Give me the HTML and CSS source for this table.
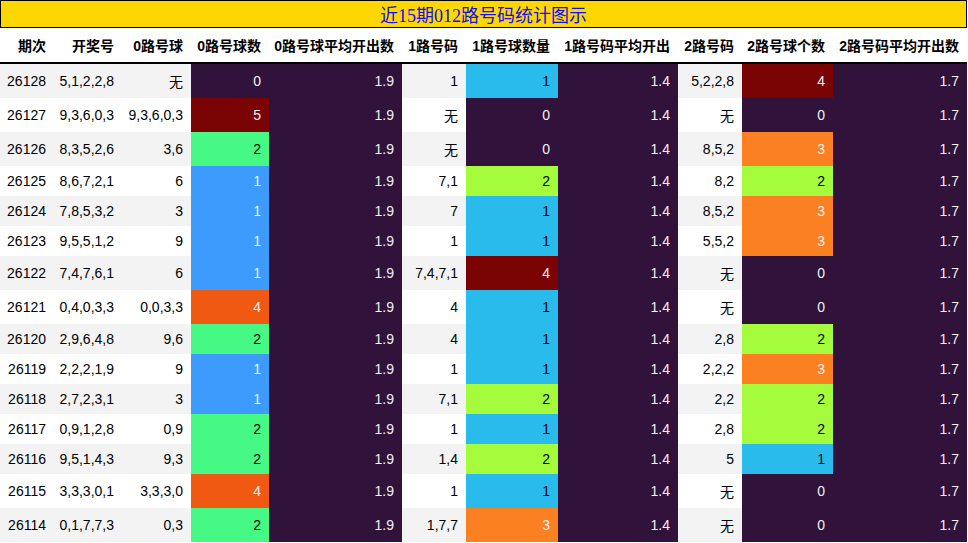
FILE: index.html
```html
<!DOCTYPE html>
<html lang="zh">
<head>
<meta charset="utf-8">
<title>近15期012路号码统计图示</title>
<link rel="stylesheet" href="styles.css">
</head>
<body>
<div class="wrap">
  <div class="title">近15期012路号码统计图示</div>
  <table class="stats">
    <colgroup>
      <col class="w1"><col class="w2"><col class="w3"><col class="w4"><col class="w5"><col class="w6"><col class="w7"><col class="w8"><col class="w9"><col class="w10"><col class="w11">
    </colgroup>
    <thead>
      <tr>
        <th>期次</th><th>开奖号</th><th>0路号球</th><th>0路号球数</th><th>0路号球平均开出数</th><th>1路号码</th><th>1路号球数量</th><th>1路号码平均开出</th><th>2路号码</th><th>2路号球个数</th><th>2路号码平均开出数</th>
      </tr>
    </thead>
    <tbody>
      <tr><td>26128</td><td>5,1,2,2,8</td><td>无</td><td class="c-p">0</td><td class="c-p">1.9</td><td>1</td><td class="c-c">1</td><td class="c-p">1.4</td><td>5,2,2,8</td><td class="c-r">4</td><td class="c-p">1.7</td></tr>
      <tr><td>26127</td><td>9,3,6,0,3</td><td>9,3,6,0,3</td><td class="c-r">5</td><td class="c-p">1.9</td><td>无</td><td class="c-p">0</td><td class="c-p">1.4</td><td>无</td><td class="c-p">0</td><td class="c-p">1.7</td></tr>
      <tr><td>26126</td><td>8,3,5,2,6</td><td>3,6</td><td class="c-g">2</td><td class="c-p">1.9</td><td>无</td><td class="c-p">0</td><td class="c-p">1.4</td><td>8,5,2</td><td class="c-o">3</td><td class="c-p">1.7</td></tr>
      <tr><td>26125</td><td>8,6,7,2,1</td><td>6</td><td class="c-b">1</td><td class="c-p">1.9</td><td>7,1</td><td class="c-l">2</td><td class="c-p">1.4</td><td>8,2</td><td class="c-l">2</td><td class="c-p">1.7</td></tr>
      <tr><td>26124</td><td>7,8,5,3,2</td><td>3</td><td class="c-b">1</td><td class="c-p">1.9</td><td>7</td><td class="c-c">1</td><td class="c-p">1.4</td><td>8,5,2</td><td class="c-o">3</td><td class="c-p">1.7</td></tr>
      <tr><td>26123</td><td>9,5,5,1,2</td><td>9</td><td class="c-b">1</td><td class="c-p">1.9</td><td>1</td><td class="c-c">1</td><td class="c-p">1.4</td><td>5,5,2</td><td class="c-o">3</td><td class="c-p">1.7</td></tr>
      <tr><td>26122</td><td>7,4,7,6,1</td><td>6</td><td class="c-b">1</td><td class="c-p">1.9</td><td>7,4,7,1</td><td class="c-r">4</td><td class="c-p">1.4</td><td>无</td><td class="c-p">0</td><td class="c-p">1.7</td></tr>
      <tr><td>26121</td><td>0,4,0,3,3</td><td>0,0,3,3</td><td class="c-x">4</td><td class="c-p">1.9</td><td>4</td><td class="c-c">1</td><td class="c-p">1.4</td><td>无</td><td class="c-p">0</td><td class="c-p">1.7</td></tr>
      <tr><td>26120</td><td>2,9,6,4,8</td><td>9,6</td><td class="c-g">2</td><td class="c-p">1.9</td><td>4</td><td class="c-c">1</td><td class="c-p">1.4</td><td>2,8</td><td class="c-l">2</td><td class="c-p">1.7</td></tr>
      <tr><td>26119</td><td>2,2,2,1,9</td><td>9</td><td class="c-b">1</td><td class="c-p">1.9</td><td>1</td><td class="c-c">1</td><td class="c-p">1.4</td><td>2,2,2</td><td class="c-o">3</td><td class="c-p">1.7</td></tr>
      <tr><td>26118</td><td>2,7,2,3,1</td><td>3</td><td class="c-b">1</td><td class="c-p">1.9</td><td>7,1</td><td class="c-l">2</td><td class="c-p">1.4</td><td>2,2</td><td class="c-l">2</td><td class="c-p">1.7</td></tr>
      <tr><td>26117</td><td>0,9,1,2,8</td><td>0,9</td><td class="c-g">2</td><td class="c-p">1.9</td><td>1</td><td class="c-c">1</td><td class="c-p">1.4</td><td>2,8</td><td class="c-l">2</td><td class="c-p">1.7</td></tr>
      <tr><td>26116</td><td>9,5,1,4,3</td><td>9,3</td><td class="c-g">2</td><td class="c-p">1.9</td><td>1,4</td><td class="c-l">2</td><td class="c-p">1.4</td><td>5</td><td class="c-c">1</td><td class="c-p">1.7</td></tr>
      <tr><td>26115</td><td>3,3,3,0,1</td><td>3,3,3,0</td><td class="c-x">4</td><td class="c-p">1.9</td><td>1</td><td class="c-c">1</td><td class="c-p">1.4</td><td>无</td><td class="c-p">0</td><td class="c-p">1.7</td></tr>
      <tr><td>26114</td><td>0,1,7,7,3</td><td>0,3</td><td class="c-g">2</td><td class="c-p">1.9</td><td>1,7,7</td><td class="c-o">3</td><td class="c-p">1.4</td><td>无</td><td class="c-p">0</td><td class="c-p">1.7</td></tr>
    </tbody>
  </table>
</div>
</body>
</html>
```
FILE: styles.css
```css
html, body {
  margin: 0;
  padding: 0;
  background: #ffffff;
}

.wrap {
  width: 967px;
}

.title {
  box-sizing: border-box;
  width: 967px;
  border: 1px solid #000;
  background: #ffd700;
  color: #1010f0;
  font-family: "Liberation Serif", "Noto Sans CJK SC", serif;
  font-size: 18px;
  text-align: center;
}

.stats {
  width: 967px;
  table-layout: fixed;
  border-collapse: collapse;
  border-spacing: 0;
  font-family: "Liberation Sans", "Noto Sans CJK SC", sans-serif;
  font-size: 14px;
  color: #000;
}

.w1 { width: 54px; }
.w2 { width: 68px; }
.w3 { width: 69px; }
.w4 { width: 78px; }
.w5 { width: 133px; }
.w6 { width: 64px; }
.w7 { width: 92px; }
.w8 { width: 120px; }
.w9 { width: 64px; }
.w10 { width: 91px; }
.w11 { width: 134px; }

.stats th,
.stats td {
  padding: 7px 8px 7px 0;
  text-align: right;
  white-space: nowrap;
  overflow: hidden;
}

.stats th {
  font-weight: bold;
  border-bottom: 2px solid #000;
  background: #fff;
}

.stats tbody tr:nth-child(odd) {
  background: #f3f3f3;
}

.stats tbody tr:nth-child(even) {
  background: #ffffff;
}

.c-p { background: #30123b; color: #f1f1f1; }
.c-r { background: #7a0403; color: #f1f1f1; }
.c-b { background: #3e9bfe; color: #f1f1f1; }
.c-c { background: #28bbec; color: #000; }
.c-g { background: #46f884; color: #000; }
.c-l { background: #a4fc3c; color: #000; }
.c-o { background: #fb8022; color: #f1f1f1; }
.c-x { background: #ef5911; color: #f1f1f1; }
```
